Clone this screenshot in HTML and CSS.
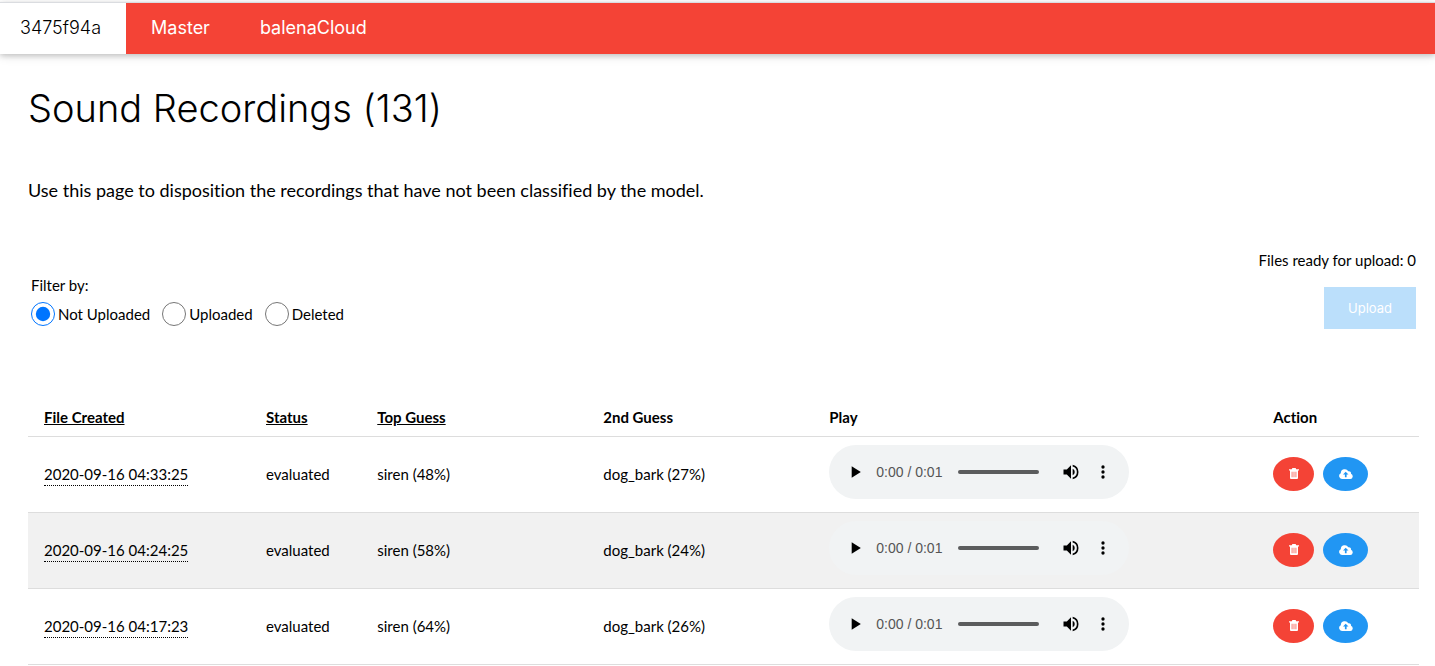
FILE: index.html
```html
<!DOCTYPE html>
<html lang="en">

<head>
  <meta charset="UTF-8">
  <meta name="viewport" content="width=device-width, initial-scale=1.0">
  <title>Sound Recordings</title>
  <link rel="stylesheet" href="styles.css">
</head>

<body>
  <!-- Icons shared by the table rows -->
  <svg class="icon-defs" aria-hidden="true">
    <symbol id="play" viewBox="0 0 24 24"><path d="M8 5v14l11-7z"/></symbol>
    <symbol id="volume" viewBox="0 0 24 24"><path d="M3 9v6h4l5 5V4L7 9H3zm13.500 3A4.500 4.500 0 0 0 14 7.970v8.050A4.470 4.470 0 0 0 16.500 12zM14 3.230v2.060a7 7 0 0 1 0 13.420v2.060a9 9 0 0 0 0-17.540z"/></symbol>
    <symbol id="more" viewBox="0 0 24 24"><path d="M12 8a2 2 0 1 0 0-4 2 2 0 0 0 0 4zm0 2a2 2 0 1 0 0 4 2 2 0 0 0 0-4zm0 6a2 2 0 1 0 0 4 2 2 0 0 0 0-4z"/></symbol>
    <symbol id="trash" viewBox="0 0 10 11"><path fill-rule="evenodd" d="M3.400 0h3.200l.6 1.200H10v1.200H9V10q0 1-1 1H2q-1 0-1-1V2.400H0V1.200h2.800zM2.700 3.700v5.600h.7V3.700zm1.950 0v5.600h.7V3.700zm1.950 0v5.600h.7V3.700z"/></symbol>
    <symbol id="cloud" viewBox="0 0 14 10"><path fill-rule="evenodd" d="M3 10A3 3 0 0 1 1.800 4.300 4 4 0 0 1 9.300 2.300 2.100 2.100 0 0 1 12 4.800 2.700 2.700 0 0 1 11.300 10zM6.700 2.800L4 5.600h1.900v2.600h1.700V5.600h1.900z"/></symbol>
  </svg>

  <nav class="navbar">
    <a href="#" class="nav-item active">3475f94a</a>
    <a href="#" class="nav-item">Master</a>
    <a href="#" class="nav-item">balenaCloud</a>
  </nav>

  <main class="content">
    <h1>Sound Recordings (131)</h1>
    <p class="intro">Use this page to disposition the recordings that have not been classified by the model.</p>

    <div class="toolbar">
      <form class="filter">
        <div>Filter by:</div>
        <div class="options">
          <label><input type="radio" name="filter" value="created" checked>Not Uploaded</label>
          <label><input type="radio" name="filter" value="uploaded">Uploaded</label>
          <label><input type="radio" name="filter" value="deleted">Deleted</label>
        </div>
      </form>
      <div class="upload">
        <div>Files ready for upload: 0</div>
        <button type="button" class="upload-btn" disabled>Upload</button>
      </div>
    </div>

    <table class="recordings">
      <thead>
        <tr>
          <th class="col-file"><a href="#">File Created</a></th>
          <th class="col-status"><a href="#">Status</a></th>
          <th class="col-guess"><a href="#">Top Guess</a></th>
          <th class="col-guess">2nd Guess</th>
          <th class="col-play">Play</th>
          <th>Action</th>
        </tr>
      </thead>
      <tbody>
        <tr>
          <td><a href="#" class="file">2020-09-16 04:33:25</a></td>
          <td>evaluated</td>
          <td>siren (48%)</td>
          <td>dog_bark (27%)</td>
          <td>
            <div class="player">
              <button type="button" aria-label="Play"><svg><use href="#play"/></svg></button>
              <span class="time">0:00 / 0:01</span>
              <input type="range" min="0" max="100" value="0" aria-label="Position">
              <button type="button" aria-label="Mute"><svg><use href="#volume"/></svg></button>
              <button type="button" aria-label="More"><svg><use href="#more"/></svg></button>
            </div>
          </td>
          <td>
            <div class="actions">
              <button type="button" class="delete" aria-label="Delete"><svg><use href="#trash"/></svg></button>
              <button type="button" class="send" aria-label="Upload"><svg><use href="#cloud"/></svg></button>
            </div>
          </td>
        </tr>
        <tr>
          <td><a href="#" class="file">2020-09-16 04:24:25</a></td>
          <td>evaluated</td>
          <td>siren (58%)</td>
          <td>dog_bark (24%)</td>
          <td>
            <div class="player">
              <button type="button" aria-label="Play"><svg><use href="#play"/></svg></button>
              <span class="time">0:00 / 0:01</span>
              <input type="range" min="0" max="100" value="0" aria-label="Position">
              <button type="button" aria-label="Mute"><svg><use href="#volume"/></svg></button>
              <button type="button" aria-label="More"><svg><use href="#more"/></svg></button>
            </div>
          </td>
          <td>
            <div class="actions">
              <button type="button" class="delete" aria-label="Delete"><svg><use href="#trash"/></svg></button>
              <button type="button" class="send" aria-label="Upload"><svg><use href="#cloud"/></svg></button>
            </div>
          </td>
        </tr>
        <tr>
          <td><a href="#" class="file">2020-09-16 04:17:23</a></td>
          <td>evaluated</td>
          <td>siren (64%)</td>
          <td>dog_bark (26%)</td>
          <td>
            <div class="player">
              <button type="button" aria-label="Play"><svg><use href="#play"/></svg></button>
              <span class="time">0:00 / 0:01</span>
              <input type="range" min="0" max="100" value="0" aria-label="Position">
              <button type="button" aria-label="Mute"><svg><use href="#volume"/></svg></button>
              <button type="button" aria-label="More"><svg><use href="#more"/></svg></button>
            </div>
          </td>
          <td>
            <div class="actions">
              <button type="button" class="delete" aria-label="Delete"><svg><use href="#trash"/></svg></button>
              <button type="button" class="send" aria-label="Upload"><svg><use href="#cloud"/></svg></button>
            </div>
          </td>
        </tr>
      </tbody>
    </table>
  </main>
</body>

</html>
```

FILE: styles.css
```css
* {
  box-sizing: border-box;
}

body {
  margin: 0;
  padding-top: 2px;
  font-family: Lato, sans-serif;
  font-size: 15px;
  font-variant-ligatures: none;
  line-height: 22px;
  color: #000;
  background-color: #fff;
}

a {
  color: inherit;
}

svg {
  display: block;
  fill: currentColor;
}

.icon-defs {
  display: none;
}

.navbar {
  display: flex;
  border-top: 1px solid #dadce0;
  background-color: #f44336;
  box-shadow: 0 2px 5px rgba(0, 0, 0, 0.16), 0 2px 10px rgba(0, 0, 0, 0.12);
  font-family: Inter, sans-serif;
  font-size: 18px;
  line-height: 27px;
}

.nav-item {
  padding: 11px 25px 13px;
  color: #fff;
  text-decoration: none;
}

.nav-item.active {
  padding-left: 20px;
  background-color: #fff;
  color: #000;
  font-weight: 300;
}

.content {
  padding: 26px 16px 0 28px;
}

h1 {
  margin: 0;
  font-family: Inter, sans-serif;
  font-size: 38px;
  font-weight: 300;
  line-height: 56px;
}

.intro {
  margin: 41px 0 46px;
  font-size: 18px;
  line-height: 26px;
}

.toolbar {
  display: flex;
  justify-content: space-between;
  align-items: flex-end;
  padding: 0 3px;
}

.filter {
  margin-bottom: 3px;
}

.options {
  display: flex;
  gap: 12px;
  margin-top: 6px;
}

.options label {
  display: flex;
  align-items: center;
  gap: 3px;
}

.options input {
  width: 24px;
  height: 24px;
  margin: 0;
}

.upload {
  text-align: right;
}

.upload-btn {
  margin-top: 16px;
  padding: 8px 24px;
  border: none;
  background-color: #2196f3;
  color: #fff;
  font-family: Inter, sans-serif;
  font-size: 13px;
  line-height: 26px;
  opacity: 0.3;
}

.recordings {
  width: 100%;
  margin-top: 69px;
  table-layout: fixed;
  border-collapse: collapse;
}

.recordings tr {
  border-bottom: 1px solid #ddd;
}

.recordings tbody tr:nth-child(even) {
  background-color: #f1f1f1;
}

.recordings th,
.recordings td {
  padding: 8px;
  text-align: left;
}

.recordings td {
  padding-bottom: 10px;
}

.recordings th:first-child,
.recordings td:first-child {
  padding-left: 16px;
}

.col-file {
  width: 230px;
}

.col-status {
  width: 8%;
}

.col-guess {
  width: 226px;
}

.col-play {
  width: 444px;
}

.file {
  padding-bottom: 2px;
  border-bottom: 1px dotted #000;
  text-decoration: none;
}

/* audio player */
.player {
  display: flex;
  align-items: center;
  width: 300px;
  height: 54px;
  margin-bottom: 3px;
  padding: 0 10px;
  border-radius: 27px;
  background-color: #f1f3f4;
}

.player button {
  width: 32px;
  padding: 6px;
  border: none;
  background: none;
  color: #000;
}

.player svg {
  width: 20px;
  height: 20px;
}

.player .time {
  margin-left: 5px;
  color: #555;
  font-family: "Liberation Sans", Arial, sans-serif;
  font-size: 14px;
}

.player input {
  appearance: none;
  flex: 1;
  min-width: 0;
  height: 4px;
  margin: 0 16px;
  border-radius: 2px;
  background-color: #5b5c5d;
}

.player input::-webkit-slider-thumb {
  appearance: none;
  width: 0;
  height: 0;
}

.actions {
  display: flex;
  gap: 9px;
}

.actions button {
  display: flex;
  align-items: center;
  justify-content: center;
  height: 34px;
  border: none;
  border-radius: 50%;
  color: #fff;
}

.actions .delete {
  width: 41px;
  background-color: #f44336;
}

.actions .send {
  width: 45px;
  background-color: #2196f3;
}

.delete svg {
  width: 10px;
  height: 11px;
}

.send svg {
  width: 14px;
  height: 10px;
}
```
